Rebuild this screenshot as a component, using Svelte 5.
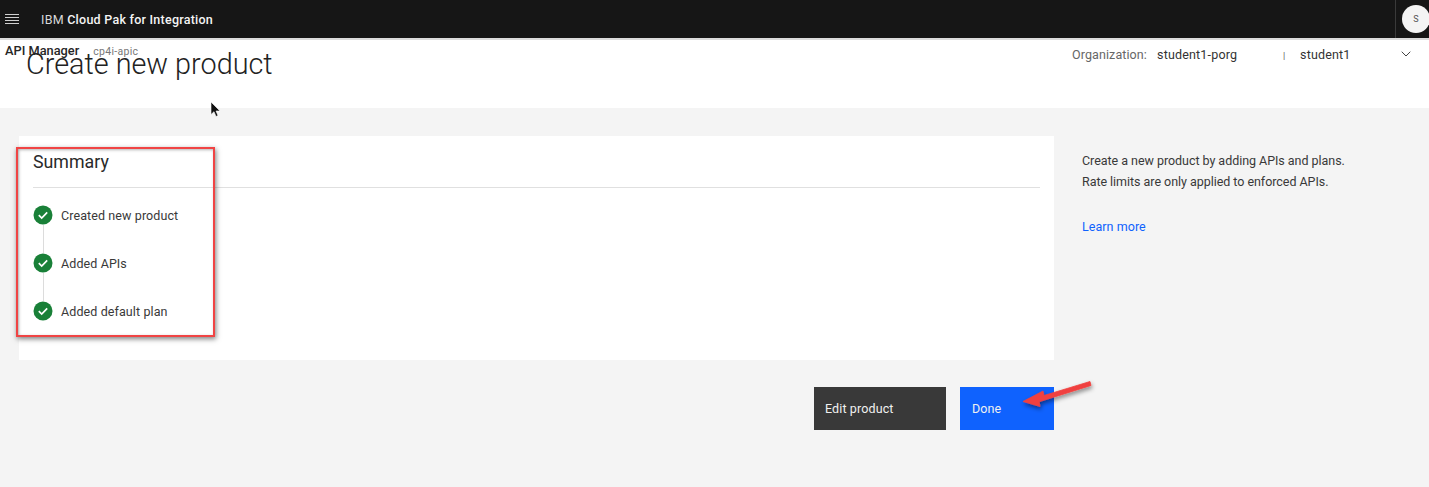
<script>
  const steps = ['Created new product', 'Added APIs', 'Added default plan'];
</script>

<div class="page">
  <header class="topbar">
    <button class="menu" aria-label="Menu">
      <svg width="14" height="10" viewBox="0 0 14 10"><path d="M0 .5h14M0 3.5h14M0 6.5h14M0 9.5h14" stroke="#cfcfcf" stroke-width="1"/></svg>
    </button>
    <div class="brand">IBM <b>Cloud Pak for Integration</b></div>
    <div class="avatar-cell"><span class="avatar">S</span></div>
  </header>

  <section class="head">
    <div class="crumbs">
      <span class="app">API Manager</span>
      <span class="inst">cp4i-apic</span>
    </div>
    <h1>Create new product</h1>
    <div class="org">
      <span class="org-label">Organization:</span>
      <span class="org-name">student1-porg</span>
      <span class="sep">|</span>
      <span class="user">student1</span>
      <svg class="chev" width="10" height="6" viewBox="0 0 10 6"><path d="M.7.7 5 5l4.3-4.3" fill="none" stroke="#444" stroke-width="1"/></svg>
    </div>
  </section>

  <main class="body">
    <div class="left">
      <section class="card">
        <h2>Summary</h2>
        <ul class="steps">
          {#each steps as s}
            <li>
              <svg class="check" width="20" height="20" viewBox="0 0 20 20"><circle cx="10" cy="10" r="9.5" fill="#198038"/><path d="M5.8 10.2 8.7 13l5.5-5.6" fill="none" stroke="#fff" stroke-width="1.7"/></svg>
              <span>{s}</span>
            </li>
          {/each}
        </ul>
      </section>
      <div class="actions">
        <button class="btn dark">Edit product</button>
        <button class="btn blue">Done</button>
      </div>
    </div>
    <aside class="help">
      <p>Create a new product by adding APIs and plans.<br />Rate limits are only applied to enforced APIs.</p>
      <a href="#learn">Learn more</a>
    </aside>
  </main>

  <div class="redbox"></div>
  <svg class="arrow" width="78" height="38" viewBox="0 0 78 38">
    <defs><filter id="sh" x="-20%" y="-30%" width="150%" height="200%"><feDropShadow dx="1" dy="2.5" stdDeviation="2" flood-color="#000" flood-opacity=".45"/></filter></defs>
    <path d="M70 4.5 24 18.5l-1-4.500L3 24.500l17 5-.8-4.800L71 8.500z" fill="#f0413f" stroke="#f0413f" stroke-width=".8" stroke-linejoin="round" filter="url(#sh)"/>
  </svg>
  <svg class="cursor" width="11" height="17" viewBox="0 0 11 17"><path d="M1 1v12.500l3-2.800 2 4.800 2-.9-2-4.600h4z" fill="#111" stroke="#fff" stroke-width=".6"/></svg>
</div>

<style>
  :global(body) { margin: 0; background: #f4f4f4; }
  .page {
    position: relative;
    height: 487px;
    overflow: hidden;
    font-family: Roboto, "Noto Sans", sans-serif;
    color: #262626;
    background: #f4f4f4;
  }
  .topbar {
    height: 38px;
    background: #161616;
    color: #e4e4e4;
    display: flex;
    align-items: center;
    border-bottom: 2px solid #dcdcdc;
  }
  .menu {
    width: 41px;
    padding: 0 0 0 5px;
    border: 0;
    background: none;
    display: flex;
    justify-content: flex-start;
  }
  .brand { font-size: 12.5px; letter-spacing: .25px; color: #d8d8d8; }
  .brand b { font-weight: 500; color: #f4f4f4; }
  .avatar-cell {
    margin-left: auto;
    height: 100%;
    width: 34px;
    box-sizing: border-box;
    border-left: 1px solid #3a3a3a;
    display: flex;
    align-items: center;
    padding-left: 6px;
  }
  .avatar {
    flex: none;
    width: 28px;
    height: 28px;
    border-radius: 50%;
    background: #f4f4f4;
    color: #555;
    font-size: 9px;
    display: flex;
    align-items: center;
    justify-content: center;
  }
  .head {
    position: relative;
    height: 68px;
    background: #fff;
  }
  .crumbs {
    position: absolute;
    left: 5px;
    top: 3px;
    display: flex;
    align-items: baseline;
    gap: 14px;
  }
  .app { font-size: 12.8px; font-weight: 500; color: #262626; }
  .inst { font-size: 10.5px; color: #777; letter-spacing: .3px; }
  h1 {
    margin: 0;
    position: absolute;
    left: 26px;
    top: 6px;
    font-size: 28.8px;
    line-height: 36px;
    font-weight: 300;
    color: #222;
  }
  .org {
    position: absolute;
    top: 6px;
    left: 1072px;
    right: 18px;
    display: flex;
    align-items: center;
    height: 16px;
    font-size: 12.5px;
    letter-spacing: .18px;
  }
  .org-label { width: 85px; color: #666; letter-spacing: .1px; }
  .org-name { width: 126px; color: #333; }
  .sep { width: 17px; font-size: 9px; color: #555; padding-top: 3px; }
  .user { color: #333; }
  .chev { margin-left: auto; }
  .body {
    display: flex;
    padding: 28px 0 0 19px;
  }
  .left { width: 1035px; flex: none; }
  .card {
    height: 224px;
    box-sizing: border-box;
    background: #fff;
    padding: 14px 14px 0;
  }
  h2 {
    margin: 0;
    height: 37px;
    font-size: 17.8px;
    line-height: 24px;
    font-weight: 400;
    color: #2a2a2a;
    border-bottom: 1px solid #e0e0e0;
  }
  .steps { list-style: none; margin: 17px 0 0; padding: 0; }
  .steps li {
    position: relative;
    display: flex;
    align-items: center;
    gap: 8px;
    height: 20px;
    margin-bottom: 28px;
    font-size: 12.5px;
    letter-spacing: .1px;
    color: #393939;
  }
  .steps li:not(:last-child)::after {
    content: '';
    position: absolute;
    left: 10px;
    top: 20px;
    width: 1px;
    height: 28px;
    background: #dcdcdc;
  }
  .check { flex: none; }
  .actions {
    display: flex;
    justify-content: flex-end;
    gap: 14px;
    margin-top: 27px;
  }
  .btn {
    height: 43px;
    border: 0;
    padding: 0 0 0 11px;
    text-align: left;
    font-family: inherit;
    font-size: 12.5px;
    letter-spacing: .12px;
    color: #f0f0f0;
  }
  .dark { width: 132px; background: #393939; }
  .blue { width: 94px; background: #0f62fe; padding-left: 12px; }
  .help {
    padding: 14px 0 0 28px;
    font-size: 12.5px;
    line-height: 21px;
    letter-spacing: -.04px;
    color: #393939;
  }
  .help p { margin: 0 0 24px; }
  .help a { color: #0f62fe; text-decoration: none; letter-spacing: .05px; }
  .redbox {
    position: absolute;
    left: 16px;
    top: 147px;
    width: 195px;
    height: 186px;
    border: 2px solid #f04444;
    box-shadow: 1px 2px 5px rgba(0, 0, 0, .5), inset 1px 1px 3px rgba(0, 0, 0, .3);
  }
  .arrow { position: absolute; left: 1020px; top: 377px; }
  .cursor { position: absolute; left: 210px; top: 101px; }
</style>
